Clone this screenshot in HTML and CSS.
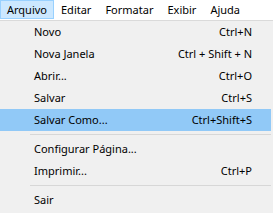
FILE: index.html
```html
<!DOCTYPE html>
<html>
<head>
	<meta charset="utf-8">
	<link rel="stylesheet" href="styles.css">
</head>
<body>
	<div class="menubar">
		<span class="top active">Arquivo</span>
		<span class="top">Editar</span>
		<span class="top">Formatar</span>
		<span class="top">Exibir</span>
		<span class="top">Ajuda</span>
	</div>
	<ul class="menu">
		<li class="item"><span>Novo</span><span class="key">Ctrl+N</span></li>
		<li class="item"><span>Nova Janela</span><span class="key">Ctrl + Shift + N</span></li>
		<li class="item"><span>Abrir...</span><span class="key">Ctrl+O</span></li>
		<li class="item"><span>Salvar</span><span class="key">Ctrl+S</span></li>
		<li class="item hover"><span>Salvar Como...</span><span class="key">Ctrl+Shift+S</span></li>
		<li class="sep"></li>
		<li class="item"><span>Configurar Página...</span></li>
		<li class="item"><span>Imprimir...</span><span class="key">Ctrl+P</span></li>
		<li class="sep"></li>
		<li class="item"><span>Sair</span></li>
	</ul>
</body>
</html>
```

FILE: styles.css
```css
* {
	margin: 0;
	padding: 0;
	box-sizing: border-box;
}

html, body {
	width: 100%;
	height: 100%;
	overflow: hidden;
}

body {
	font-family: "Noto Sans", sans-serif;
	font-size: 11px;
	color: #000;
	background: #f0f0f0;
}

.menubar {
	display: flex;
	height: 21px;
	background: #fff;
	border-bottom: 1px solid #dadada;
	padding-bottom: 1px;
}

.top {
	padding: 0 6px;
	line-height: 17px;
	border: 1px solid transparent;
}
.top.active {
	background: #cce8ff;
	border-color: #99d1ff;
}

.menu {
	list-style-type: none;
	padding-right: 2px;
}

.item {
	display: flex;
	justify-content: space-between;
	height: 22px;
	line-height: 22px;
	padding: 0 19px 0 34px;
}
.item.hover {
	background: #91c9f7;
}

.sep {
	height: 7px;
	padding-top: 3px;
	margin-left: 30px;
}
.sep::before {
	content: "";
	display: block;
	height: 1px;
	background: #d7d7d7;
}
```
